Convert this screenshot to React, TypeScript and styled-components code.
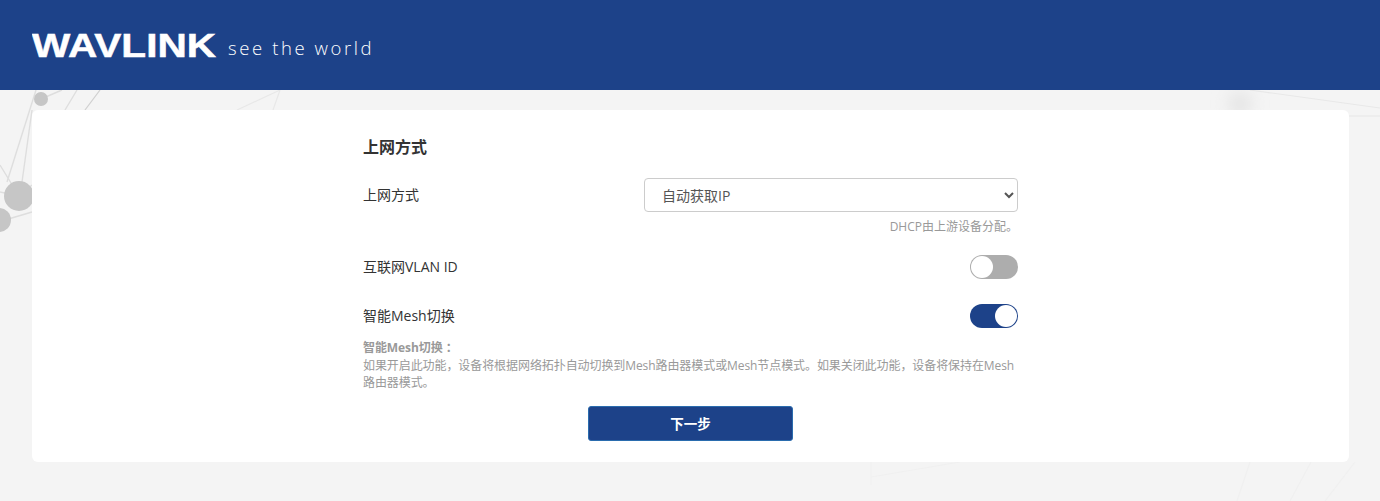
import React from "react";
import styled, { createGlobalStyle } from "styled-components";

const Global = createGlobalStyle`
  html, body { margin: 0; padding: 0; background: #f4f4f4; }
  * { box-sizing: border-box; }
  body { font-family: "Open Sans", "Noto Sans CJK SC", sans-serif; color: #333; }
`;

const Page = styled.div`
  position: relative;
  height: 501px;
  overflow: hidden;
`;

const Backdrop = styled.svg`
  position: absolute;
  inset: 0;
  width: 1380px;
  height: 501px;
`;

const Header = styled.header`
  position: relative;
  height: 90px;
  background: #1d4289;
  display: flex;
  align-items: flex-start;
  padding: 25px 0 0 32px;
`;

const LogoMark = styled.svg`
  display: block;
  width: 185px;
  height: 40px;
`;

const Slogan = styled.span`
  margin: 10px 0 0 11px;
  font-size: 18.5px;
  line-height: 26px;
  font-weight: 300;
  letter-spacing: 2.6px;
  color: #fff;
  white-space: nowrap;
`;

const Main = styled.main`
  position: relative;
  padding: 20px 31px 0 32px;
`;

const Card = styled.section`
  height: 352px;
  background: #fff;
  border-radius: 6px;
  padding-top: 26px;
`;

const Form = styled.div`
  width: 655px;
  margin: 0 auto;
`;

const Title = styled.h2`
  margin: 0;
  height: 22px;
  font-size: 16px;
  line-height: 22px;
  font-weight: 700;
  color: #333;
`;

const Row = styled.div<{ $top: number; $h: number }>`
  display: flex;
  align-items: center;
  justify-content: space-between;
  margin-top: ${(p) => p.$top}px;
  height: ${(p) => p.$h}px;
`;

const Label = styled.label`
  font-size: 14px;
  line-height: 20px;
  color: #333;
`;

const Select = styled.select`
  width: 374px;
  height: 34px;
  padding: 0 13px;
  border: 1px solid #ccc;
  border-radius: 4px;
  background-color: #fff;
  color: #555;
  font-family: "Open Sans", "Noto Sans CJK SC", sans-serif;
  font-size: 14px;
`;

const Hint = styled.p`
  margin: 5px 0 0 0;
  height: 18px;
  text-align: right;
  font-size: 12px;
  line-height: 18px;
  color: #999;
`;

const Track = styled.span<{ $on?: boolean }>`
  position: relative;
  display: block;
  width: 48px;
  height: 24px;
  border-radius: 12px;
  background: ${(p) => (p.$on ? "#1d4289" : "#adadad")};
`;

const Knob = styled.span<{ $on?: boolean }>`
  position: absolute;
  top: 1px;
  left: ${(p) => (p.$on ? "25px" : "1px")};
  width: 22px;
  height: 22px;
  border-radius: 50%;
  background: #fff;
`;

const Note = styled.div`
  margin-top: 11px;
  font-size: 12px;
  line-height: 17.5px;
  letter-spacing: -0.08px;
  color: #999;
  & > strong {
    display: block;
    font-weight: 700;
  }
`;

const Actions = styled.div`
  display: flex;
  justify-content: center;
  margin-top: 14px;
`;

const NextButton = styled.button`
  width: 205px;
  height: 35px;
  background: #1d4289;
  border: 1px solid #2a6cae;
  border-radius: 3px;
  color: #fff;
  font-family: "Open Sans", "Noto Sans CJK SC", sans-serif;
  font-size: 13.5px;
  font-weight: 700;
`;

export default function App() {
  return (
    <Page>
      <Global />
      <Backdrop viewBox="0 0 1380 501" aria-hidden="true">
        <defs>
          <filter id="soft" x="-100%" y="-100%" width="300%" height="300%">
            <feGaussianBlur stdDeviation="8" />
          </filter>
        </defs>
        <g stroke="#dedede" strokeWidth="1.4" fill="none">
          <path d="M36 90 L7 182" />
          <path d="M41 99 L62 90" />
          <path d="M22 182 L32 110" />
          <path d="M77 90 L65 110" />
          <path d="M0 165 L19 196 L32 185" />
          <path d="M0 192 L19 196" />
          <path d="M5 220 L32 212" />
        </g>
        <path d="M100 90 L85 110" stroke="#cfcfcf" strokeWidth="1.2" fill="none" />
        <g stroke="#e8e8e8" strokeWidth="1.2" fill="none">
          <path d="M280 90 L273 110" />
          <path d="M280 90 L237 110" />
          <path d="M1250 90 L1380 108" />
          <path d="M1349 116 L1380 116" />
        </g>
        <g stroke="#f0f0f0" strokeWidth="1.2" fill="none">
          <path d="M871 477 L960 462" />
          <path d="M871 462 L871 485" />
          <path d="M1250 462 L1237 501" />
          <path d="M1311 462 L1290 501" />
          <path d="M1355 462 L1325 501" />
        </g>
        <circle cx="41" cy="99" r="7" fill="#c6c6c6" />
        <circle cx="19" cy="196" r="15" fill="#c6c6c6" />
        <circle cx="-1" cy="220" r="12" fill="#c6c6c6" />
        <circle cx="1240" cy="104" r="12" fill="#e4e4e4" filter="url(#soft)" />
      </Backdrop>
      <Header>
        <LogoMark viewBox="0 0 185 40" role="img" aria-label="WAVLINK">
          <text
            x="0"
            y="32"
            textLength="184"
            lengthAdjust="spacingAndGlyphs"
            fontFamily="'Liberation Sans', sans-serif"
            fontWeight="700"
            fontSize="33.5"
            fill="#fff"
            stroke="#fff"
            strokeWidth="0.5"
          >
            WAVLINK
          </text>
        </LogoMark>
        <Slogan>see the world</Slogan>
      </Header>
      <Main>
        <Card>
          <Form>
            <Title>上网方式</Title>
            <Row $top={19} $h={36}>
              <Label>上网方式</Label>
              <Select defaultValue="dhcp">
                <option value="dhcp">自动获取IP</option>
              </Select>
            </Row>
            <Hint>DHCP由上游设备分配。</Hint>
            <Row $top={19} $h={24}>
              <Label>互联网VLAN ID</Label>
              <Track>
                <Knob />
              </Track>
            </Row>
            <Row $top={25} $h={24}>
              <Label>智能Mesh切换</Label>
              <Track $on>
                <Knob $on />
              </Track>
            </Row>
            <Note>
              <strong>智能Mesh切换 ：</strong>
              如果开启此功能，设备将根据网络拓扑自动切换到Mesh路由器模式或Mesh节点模式。如果关闭此功能，设备将保持在Mesh路由器模式。
            </Note>
            <Actions>
              <NextButton type="button">下一步</NextButton>
            </Actions>
          </Form>
        </Card>
      </Main>
    </Page>
  );
}
